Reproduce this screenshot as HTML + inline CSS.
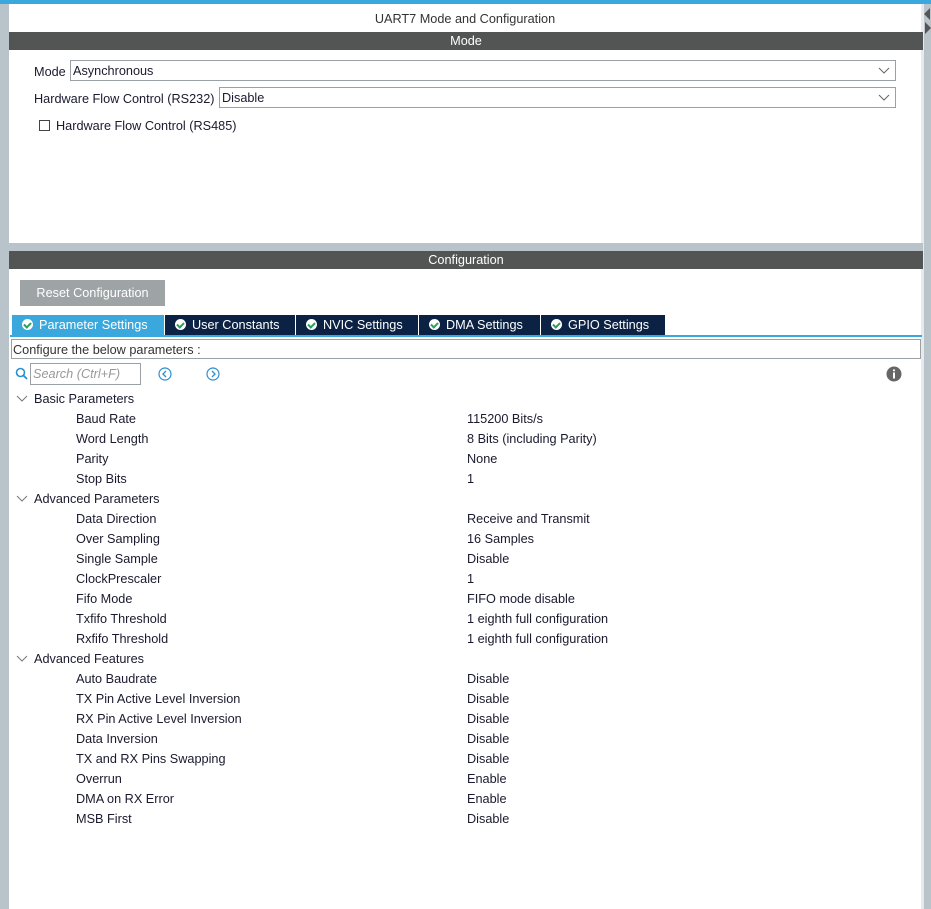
<!DOCTYPE html>
<html><head><meta charset="utf-8"><style>
*{margin:0;padding:0;box-sizing:border-box}
body{width:931px;height:909px;position:relative;background:#fff;font-family:"Liberation Sans",Arial,sans-serif;font-size:12.7px;color:#1a1a2e;overflow:hidden}
.a{position:absolute}
.row{position:absolute;height:20px;line-height:20px;white-space:nowrap}
.sel{position:absolute;border:1px solid #9aa0a4;background:#fff;height:21px;line-height:21px;padding-left:2px}
.sel svg{position:absolute;right:5px;top:6px}
.tab{position:absolute;top:315px;height:20px;line-height:20px;background:#0b2244;color:#fff;font-size:12.7px;padding-left:10px}
.chk{display:inline-block;width:11px;height:11px;border-radius:50%;background:#fff;vertical-align:-1px;margin-right:6px;position:relative}
.chk::after{content:"";position:absolute;left:3px;top:2px;width:3px;height:5px;border:solid #2aa05a;border-width:0 2px 2px 0;transform:rotate(45deg)}
</style></head><body>
<div class="a" style="left:0;top:0;width:931px;height:4px;background:#3aa8dc"></div>
<div class="a" style="left:0;top:4px;width:9px;height:905px;background:#b9c4ca"></div>
<div class="a" style="left:923px;top:4px;width:8px;height:905px;background:#b9c4ca"></div>
<div class="a" style="left:921px;top:4px;width:3px;height:905px;background:#e6eaec"></div>
<div class="a" style="left:924px;top:8px;width:0;height:0;border-top:6px solid transparent;border-bottom:6px solid transparent;border-right:6px solid #555"></div>
<div class="a" style="left:925px;top:22px;width:0;height:0;border-top:6px solid transparent;border-bottom:6px solid transparent;border-left:6px solid #555"></div>
<div class="row" style="left:9px;width:912px;top:9px;text-align:center;color:#333">UART7 Mode and Configuration</div>
<div class="a" style="left:9px;top:32px;width:914px;height:18px;background:#535555;color:#fff;text-align:center;line-height:19px">Mode</div>
<div class="row" style="left:34px;top:62px">Mode</div>
<div class="sel" style="left:70px;top:60px;width:826px">Asynchronous<svg width="12" height="8"><path d="M1 1l5 5 5-5" stroke="#666" fill="none"/></svg></div>
<div class="row" style="left:34px;top:89px">Hardware Flow Control (RS232)</div>
<div class="sel" style="left:219px;top:87px;width:677px">Disable<svg width="12" height="8"><path d="M1 1l5 5 5-5" stroke="#666" fill="none"/></svg></div>
<div class="a" style="left:39px;top:120px;width:11px;height:11px;border:1px solid #444"></div>
<div class="row" style="left:56px;top:116px">Hardware Flow Control (RS485)</div>
<div class="a" style="left:9px;top:243px;width:914px;height:8px;background:#b9c4ca"></div>
<div class="a" style="left:9px;top:251px;width:914px;height:18px;background:#535555;color:#fff;text-align:center;line-height:19px">Configuration</div>
<div class="a" style="left:20px;top:280px;width:145px;height:26px;background:#9ea3a6;color:#fff;line-height:27px;text-align:center">Reset Configuration</div>
<div class="tab" style="left:12px;width:152px;background:#3aa8dc"><span class="chk"></span>Parameter Settings</div>
<div class="tab" style="left:165px;width:130px"><span class="chk"></span>User Constants</div>
<div class="tab" style="left:296px;width:122px"><span class="chk"></span>NVIC Settings</div>
<div class="tab" style="left:419px;width:121px"><span class="chk"></span>DMA Settings</div>
<div class="tab" style="left:541px;width:124px"><span class="chk"></span>GPIO Settings</div>
<div class="a" style="left:10px;top:335px;width:912px;height:2px;background:#3aa8dc"></div>
<div class="a" style="left:11px;top:339px;width:910px;height:20px;border:1px solid #9aa0a4;line-height:20px;padding-left:1px;color:#333">Configure the below parameters :</div>
<svg class="a" style="left:15px;top:367px" width="13" height="13"><circle cx="5.5" cy="5.5" r="4" stroke="#2a8fd0" stroke-width="1.6" fill="none"/><path d="M8.5 8.5l3.5 3.5" stroke="#2a8fd0" stroke-width="1.8"/></svg>
<div class="a" style="left:30px;top:363px;width:111px;height:22px;border:1px solid #9aa0a4;color:#999;font-style:italic;line-height:21px;padding-left:2px">Search (Ctrl+F)</div>
<svg class="a" style="left:158px;top:367px" width="14" height="14"><circle cx="7" cy="7" r="6" stroke="#2a8fd0" stroke-width="1.2" fill="none"/><path d="M8 4l-3 3 3 3" stroke="#2a8fd0" stroke-width="1.3" fill="none"/></svg>
<svg class="a" style="left:206px;top:367px" width="14" height="14"><circle cx="7" cy="7" r="6" stroke="#2a8fd0" stroke-width="1.2" fill="none"/><path d="M6 4l3 3-3 3" stroke="#2a8fd0" stroke-width="1.3" fill="none"/></svg>
<svg class="a" style="left:886px;top:366px" width="16" height="16"><circle cx="8" cy="8" r="7.5" fill="#666"/><rect x="7" y="6.5" width="2" height="6" fill="#fff"/><circle cx="8" cy="4.3" r="1.1" fill="#fff"/></svg>
<div id="tree"></div>
<script>
var d=[["Basic Parameters"],["Baud Rate","115200 Bits/s"],["Word Length","8 Bits (including Parity)"],["Parity","None"],["Stop Bits","1"],["Advanced Parameters"],["Data Direction","Receive and Transmit"],["Over Sampling","16 Samples"],["Single Sample","Disable"],["ClockPrescaler","1"],["Fifo Mode","FIFO mode disable"],["Txfifo Threshold","1 eighth full configuration"],["Rxfifo Threshold","1 eighth full configuration"],["Advanced Features"],["Auto Baudrate","Disable"],["TX Pin Active Level Inversion","Disable"],["RX Pin Active Level Inversion","Disable"],["Data Inversion","Disable"],["TX and RX Pins Swapping","Disable"],["Overrun","Enable"],["DMA on RX Error","Enable"],["MSB First","Disable"]];
var h="";d.forEach(function(r,i){var y=389+i*20;if(r.length==1){h+='<svg class="a" style="left:16px;top:'+(y+6)+'px" width="12" height="8"><path d="M1 1l5 5 5-5" stroke="#777" fill="none"/></svg><div class="row" style="left:34px;top:'+y+'px">'+r[0]+'</div>';}else{h+='<div class="row" style="left:76px;top:'+y+'px">'+r[0]+'</div><div class="row" style="left:467px;top:'+y+'px">'+r[1]+'</div>';}});
document.getElementById("tree").innerHTML=h;
</script>
</body></html>
